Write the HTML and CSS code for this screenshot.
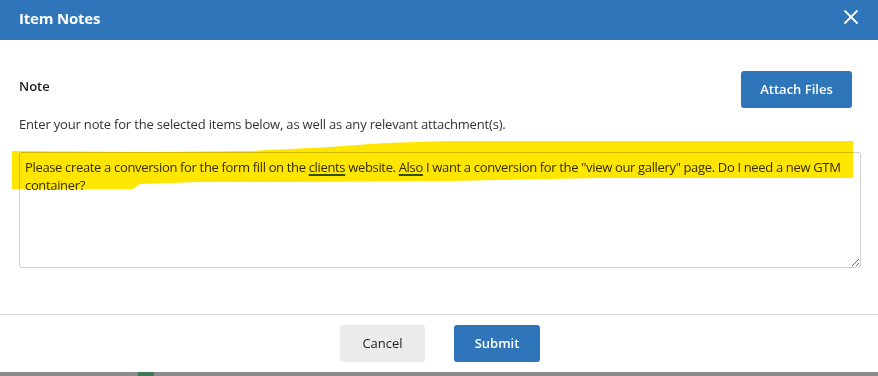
FILE: index.html
```html
<!DOCTYPE html>
<html lang="en">
<head>
<meta charset="utf-8">
<title>Item Notes</title>
<link rel="stylesheet" href="styles.css">
</head>
<body>
<div class="modal">
  <header class="modal-header">
    <h1 class="modal-title">Item Notes</h1>
    <button class="close-btn" aria-label="Close">
      <svg width="14" height="14" viewBox="0 0 14 14"><path d="M1 1L13 13M13 1L1 13" stroke="#fff" stroke-width="1.8" stroke-linecap="round"/></svg>
    </button>
  </header>
  <main class="modal-body">
    <div class="note-row">
      <span class="note-label">Note</span>
      <button class="btn btn-primary btn-attach">Attach Files</button>
    </div>
    <p class="note-help">Enter your note for the selected items below, as well as any relevant attachment(s).</p>
    <div class="note-box">Please create a conversion for the form fill on the <span class="spell">clients</span> website. <span class="spell">Also</span> I want a conversion for the "view our gallery" page. Do I need a new GTM container?</div>
  </main>
  <footer class="modal-footer">
    <button class="btn btn-cancel">Cancel</button>
    <button class="btn btn-primary btn-submit">Submit</button>
  </footer>
  <svg class="highlight" width="878" height="372" viewBox="0 0 878 372">
    <path d="M12 151 L150 152 L250 151 L330 147 L385 143 L450 141 L853 141 L853 178 L600 178 L450 181 L300 182 L200 182 L140 184 L133 189 L12 189 Z" fill="#ffe600"/>
  </svg>
</div>
<div class="backdrop-strip">
  <span class="strip-cell"></span>
  <span class="strip-green"></span>
</div>
</body>
</html>
```

FILE: styles.css
```css
* { box-sizing: border-box; }
html, body { margin: 0; padding: 0; }
body {
  width: 878px;
  height: 376px;
  overflow: hidden;
  background: #8c8c8c;
  font-family: "Open Sans", "Liberation Sans", sans-serif;
  color: #222;
}
.modal {
  position: relative;
  width: 878px;
  height: 372px;
  background: #fff;
  display: flex;
  flex-direction: column;
}
.modal-header {
  height: 40px;
  background: #2e75b9;
  display: flex;
  align-items: center;
  justify-content: space-between;
  padding: 0 20px 0 19px;
}
.modal-title {
  margin: 0;
  font-size: 15px;
  font-weight: 700;
  color: #fff;
  letter-spacing: -0.2px;
  margin-top: -5px;
}
.close-btn {
  background: none;
  border: 0;
  padding: 0;
  width: 14px;
  height: 14px;
  display: flex;
  margin-top: -7px;
}
.modal-body {
  padding: 31px 17px 0 19px;
  flex: 1;
}
.note-row {
  display: flex;
  justify-content: space-between;
  align-items: flex-start;
  padding-right: 9px;
}
.note-label {
  font-size: 13px;
  font-weight: 600;
  color: #222;
  margin-top: 6px;
}
.btn {
  font-family: inherit;
  font-size: 13px;
  border: 0;
  border-radius: 3px;
  cursor: pointer;
}
.btn-primary {
  background: #2e75b9;
  color: #fff;
  font-weight: 600;
}
.btn-attach {
  width: 111px;
  height: 37px;
  padding-bottom: 2px;
}
.note-help {
  margin: 7px 0 0 0;
  font-size: 13px;
  color: #333;
  letter-spacing: -0.18px;
}
.note-box {
  margin-top: 19px;
  width: 842px;
  height: 116px;
  border: 1px solid #cfcfcf;
  border-radius: 3px;
  padding: 5px 5px 0 5px;
  font-size: 13px;
  line-height: 18px;
  color: #333;
  letter-spacing: -0.34px;
  overflow: auto;
  resize: vertical;
}
.spell {
  text-decoration: underline;
  text-decoration-color: #2f5a36;
  text-decoration-thickness: 2px;
  text-underline-offset: 2px;
}
.modal-footer {
  height: 58px;
  border-top: 1px solid #dedede;
  display: flex;
  justify-content: center;
  align-items: flex-start;
  gap: 29px;
  padding-top: 10px;
  padding-left: 2px;
}
.btn-cancel {
  width: 85px;
  height: 37px;
  background: #ebebeb;
  color: #222;
  font-weight: 500;
  padding-bottom: 3px;
}
.btn-submit {
  width: 86px;
  height: 37px;
  padding-bottom: 3px;
}
.highlight {
  position: absolute;
  left: 0;
  top: 0;
  pointer-events: none;
  mix-blend-mode: multiply;
}
.backdrop-strip {
  height: 4px;
  display: flex;
  align-items: stretch;
}
.strip-cell {
  width: 138px;
}
.strip-green {
  width: 16px;
  background: #3e7a55;
}
```
